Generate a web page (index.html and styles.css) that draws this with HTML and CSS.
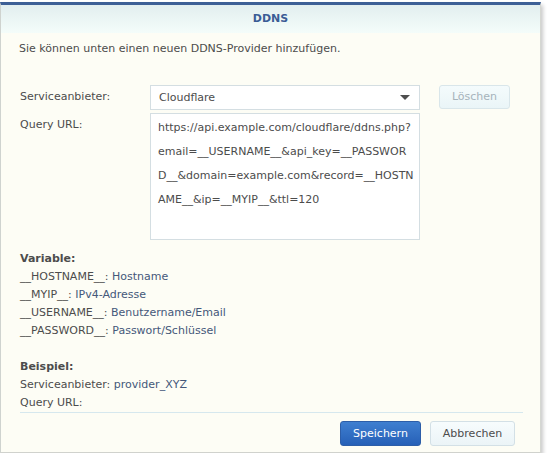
FILE: index.html
```html
<!DOCTYPE html>
<html lang="de">
<head>
<meta charset="utf-8">
<link rel="stylesheet" href="styles.css">
</head>
<body>
<div class="dialog">
  <div class="header">DDNS</div>
  <div class="body">
    <p class="intro">Sie können unten einen neuen DDNS-Provider hinzufügen.</p>
    <div class="row row-select">
      <div class="label">Serviceanbieter:</div>
      <div class="select"><span>Cloudflare</span><span class="arrow"></span></div>
      <div class="btn btn-disabled">Löschen</div>
    </div>
    <div class="row row-url">
      <div class="label">Query URL:</div>
      <div class="textarea">https://api.example.com/cloudflare/ddns.php?<br>email=__USERNAME__&amp;api_key=__PASSWOR<br>D__&amp;domain=example.com&amp;record=__HOSTN<br>AME__&amp;ip=__MYIP__&amp;ttl=120</div>
    </div>
    <div class="help">
      <div class="bold">Variable:</div>
      <div>__HOSTNAME__: <span class="val">Hostname</span></div>
      <div>__MYIP__: <span class="val">IPv4-Adresse</span></div>
      <div>__USERNAME__: <span class="val">Benutzername/Email</span></div>
      <div>__PASSWORD__: <span class="val">Passwort/Schlüssel</span></div>
      <div class="gap"></div>
      <div class="bold">Beispiel:</div>
      <div>Serviceanbieter: <span class="val">provider_XYZ</span></div>
      <div>Query URL:</div>
    </div>
  </div>
  <div class="footer">
    <div class="btn btn-primary">Speichern</div>
    <div class="btn btn-default">Abbrechen</div>
  </div>
</div>
</body>
</html>
```
FILE: styles.css
```css
html, body {
  margin: 0;
  padding: 0;
  background: #ffffff;
}
body {
  font-family: "DejaVu Sans", Verdana, sans-serif;
  font-size: 11px;
  color: #4c4c4c;
}
.dialog {
  margin-top: 2px;
  width: 541px;
  height: 451px;
  box-sizing: border-box;
  background: #fdfdf5;
  border-top: 3px solid #3d5f96;
  border-left: 1px solid #cfd3cf;
  border-right: 1px solid #d5d7d2;
  border-bottom: 1px solid #d0d2cd;
  box-shadow: 2px 3px 4px rgba(0,0,0,0.22);
  display: flex;
  flex-direction: column;
}
.header {
  height: 28px;
  line-height: 28px;
  text-align: center;
  font-weight: bold;
  font-size: 11px;
  color: #3a5c95;
  background: linear-gradient(#e2eeef, #f4fdfa);
}
.body {
  flex: 1;
  padding: 0 18px 0 19px;
}
.intro {
  margin: 9px 0 0 -1px;
  line-height: 14px;
}
.row {
  display: flex;
}
.row-select {
  margin-top: 29px;
  align-items: flex-start;
}
.label {
  width: 130px;
  line-height: 24px;
}
.select {
  width: 270px;
  height: 25px;
  box-sizing: border-box;
  border: 1px solid #d4dee2;
  background: #fff;
  padding: 0 8px;
  display: flex;
  align-items: center;
  justify-content: space-between;
}
.arrow {
  width: 0;
  height: 0;
  border-left: 5px solid transparent;
  border-right: 5px solid transparent;
  border-top: 5px solid #4e4e4e;
  margin-right: 1px;
}
.btn {
  height: 25px;
  box-sizing: border-box;
  line-height: 23px;
  text-align: center;
  border-radius: 3px;
}
.btn-disabled {
  margin-left: 19px;
  width: 71px;
  height: 24px;
  line-height: 22px;
  border: 1px solid #d9e6ea;
  background: linear-gradient(#f4fbfc, #eaf5f7);
  color: #a6b3bb;
}
.row-url {
  margin-top: 3px;
}
.textarea {
  width: 270px;
  height: 127px;
  box-sizing: border-box;
  border: 1px solid #d4dee2;
  background: #fff;
  padding: 2px 7px;
  line-height: 24px;
  white-space: nowrap;
}
.help {
  margin-top: 10px;
  line-height: 18px;
}
.bold {
  font-weight: bold;
}
.val {
  color: #44587a;
}
.gap {
  height: 18px;
}
.footer {
  margin: 0 17px 0 19px;
  border-top: 1px solid #d6e8ee;
  height: 40px;
  display: flex;
  justify-content: flex-end;
  align-items: flex-start;
  padding-top: 8px;
  padding-right: 8px;
  gap: 9px;
  box-sizing: border-box;
}
.btn-primary {
  width: 81px;
  border: 1px solid #2d5ea8;
  background: linear-gradient(#3f7fd0, #2660b7);
  color: #fff;
}
.btn-default {
  width: 85px;
  border: 1px solid #d3e0e6;
  background: linear-gradient(#f7fcfd, #ebf4f7);
  color: #4c4c4c;
}
```
